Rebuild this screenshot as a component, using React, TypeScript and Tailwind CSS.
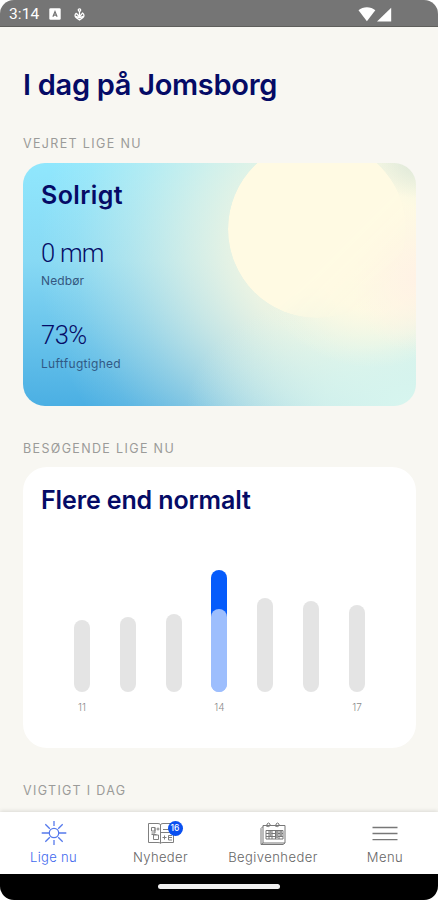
import React from 'react';

interface Bar {
  hour: number;
  height: number;
  current?: number;
  label?: boolean;
}

const bars: Bar[] = [
  { hour: 11, height: 72, label: true },
  { hour: 12, height: 75 },
  { hour: 13, height: 78 },
  { hour: 14, height: 83, current: 122, label: true },
  { hour: 15, height: 94 },
  { hour: 16, height: 91 },
  { hour: 17, height: 87, label: true },
];

function StatusBar() {
  return (
    <header className="flex h-[27px] items-center border-b border-[#5f5f5c] bg-[#757575] pl-[9px] pr-[46px] pt-0.5 text-white">
      <span className="w-10 pt-0.5 font-[Roboto] text-[15.5px] leading-none tracking-[0.1px]">3:14</span>
      <svg className="h-3 w-3" viewBox="0 0 12 12">
        <rect x="0.3" y="0.3" width="11.4" height="11.4" rx="1.2" fill="#fff" />
        <path d="M3.9 8.7 6 3.5 8.1 8.7M4.7 7.2h2.6" fill="none" stroke="#757575" strokeWidth="1.2" />
      </svg>
      <svg className="ml-[13px] h-[13px] w-[11px]" viewBox="0 0 11 13" fill="none" stroke="#fff" strokeWidth="1.3">
        <circle cx="5.5" cy="2" r="1.2" />
        <path d="M5.500 3.200V9M2.500 5C.700 6 .500 8.300 2.300 9.700L5.500 12 8.700 9.700C10.500 8.300 10.300 6 8.500 5L5.500 8.800 2.500 5.500M2 8.300l3.500 1.500L9 8.300" />
      </svg>
      <svg className="ml-auto h-[15px] w-[34px]" viewBox="0 0 34 15" fill="#fff">
        <path d="M.500 3.200C5-.8 12.800-.8 17.300 3.200L8.900 14.200Z" />
        <path d="M33.200.800V14.500H19Z" />
      </svg>
    </header>
  );
}

function WeatherCard() {
  return (
    <div className="relative h-[243px] overflow-hidden rounded-[22px] bg-[radial-gradient(ellipse_45px_35px_at_393px_0px,#dfe8d8_0,#dfe8d800_100%),radial-gradient(ellipse_65px_75px_at_393px_115px,#fff2e5_0,#fff2e500_100%),radial-gradient(ellipse_120px_115px_at_350px_90px,#fffae3_0,#fffae3f0_50%,#fffae390_70%,#fffae330_88%,#fffae300_100%),radial-gradient(ellipse_230px_130px_at_393px_243px,#d8f6ef_0,#d8f6efc0_40%,#d8f6ef00_100%),radial-gradient(ellipse_310px_290px_at_325px_90px,#f4f6e2_0,#f4f6e2eb_33%,#f4f6e2d4_40%,#f4f6e2a8_52%,#f4f6e25a_71%,#f4f6e21c_88%,#f4f6e200_100%),linear-gradient(to_bottom,#90e7fd_0,#87d9f4_40%,#4bafe3_100%)] px-[18px]">
      <div className="absolute left-[205px] top-[-23px] h-[178px] w-[178px] rounded-full bg-[#fffae3] [mask-image:linear-gradient(135deg,#000_60%,transparent_85%)]" />
      <div className="relative">
        <h2 className="pt-4 text-[25px] font-semibold leading-8 tracking-[0.4px]">Solrigt</h2>
        <p className="mt-[26px] font-[Roboto] text-[25.5px] font-light leading-8 tracking-[-0.7px]">0 mm</p>
        <p className="text-xs leading-6 tracking-[0.1px] text-[#35577f]">Nedbør</p>
        <p className="mt-[26px] font-[Roboto] text-[25.5px] font-light leading-8 tracking-[-0.5px]">73%</p>
        <p className="pt-px text-xs leading-6 tracking-[0.3px] text-[#315985]">Luftfugtighed</p>
      </div>
    </div>
  );
}

function VisitorsCard() {
  return (
    <div className="flex h-[281px] flex-col rounded-3xl bg-white">
      <h2 className="px-[18px] pt-[17px] text-[25px] font-semibold leading-8 tracking-[-0.12px]">Flere end normalt</h2>
      <div className="mt-auto flex h-[178px] items-start justify-between px-[51px]">
        {bars.map((bar) => (
          <div key={bar.hour} className="flex w-4 flex-col items-center">
            <div className="flex h-[122px] items-end">
              <div
                className={`flex w-4 items-end overflow-hidden rounded-full ${bar.current ? 'bg-linear-to-b from-[#055bfb] from-50% to-[#9dbefd] to-50%' : 'bg-[#e4e4e4]'}`}
                style={{ height: bar.current ?? bar.height }}
              >
                {bar.current && <div className="w-full rounded-t-full bg-[#9dbefd]" style={{ height: bar.height }} />}
              </div>
            </div>
            {bar.label && <span className="mt-[7px] text-[10px] font-light leading-4 text-[#8b8b8b]">{bar.hour}</span>}
          </div>
        ))}
      </div>
    </div>
  );
}

function SunIcon() {
  return (
    <svg className="h-[26px] w-[26px]" viewBox="0 0 26 26" fill="none" stroke="#5579ec" strokeWidth="1.3">
      <circle cx="13" cy="13" r="4.700" />
      <path d="M13 1v5M13 20v5M.700 13H8M18 13h7.300M4.300 4.300 8.800 8.800M17.200 17.200l4.500 4.500M4.300 21.700l4.500-4.500M17.200 8.800l4.500-4.500" />
    </svg>
  );
}

function NewsIcon() {
  return (
    <svg className="h-[22px] w-[28px]" viewBox="0 0 28 22" fill="none" stroke="#808080" strokeWidth="1">
      <path d="M1.500 1.500h9.500q2.500 0 2.500 1.500 0-1.500 2.500-1.500h10.500v19H16q-2.500 0-2.500 1 0-1-2.500-1H1.500ZM13.500 3v18" />
      <path d="M4.500 5.500H8v3.500H4.500ZM8 5.500v5.500H4.500M9.500 7h3M11 5.500v3M16 7.500h6M14 10.500h12M6.500 13h5v4.500h-5ZM4.500 12.500h5M15.500 15.500h4M17.500 13.500v4M25 13.500h-3.500v4.500H25M21.500 15.500H25" />
    </svg>
  );
}

function CalendarIcon() {
  return (
    <svg className="h-[24px] w-[26px]" viewBox="0 0 26 24" fill="none" stroke="#777" strokeWidth="1">
      <path d="M3 3.500h22v17.500H3ZM3 4.500 1 6.500v16h22l2-1.500M3 21 1 22.500" />
      <path d="M7 5V2q1.500-2 3 0v1.500q-1 2-3 .5M16 5V2q1.500-2 3 0v1.500q-1 2-3 .5" />
      <path d="M6 8.500h17v8.500H6ZM6 11.500h17M6 14.500h17M9 8.500V17M12 8.500V17M15.500 8.500V17M19 8.500V17" />
      <path d="M9.500 9h2v5h-2ZM16 9h2v7h-2ZM20 9h2v5h-2Z" fill="#999" stroke="none" />
    </svg>
  );
}

function BottomNav() {
  return (
    <nav className="flex h-[62px] shrink-0 bg-white text-[13px] text-[#666] shadow-[0_-1px_4px_rgba(0,0,0,0.12)]">
      <div className="flex w-[107px] flex-col items-center pt-2 text-[#4169ee]">
        <SunIcon />
        <span className="font-light leading-[22px] tracking-[0.3px]">Lige nu</span>
      </div>
      <div className="flex w-[107px] flex-col items-center pt-[10px]">
        <div className="relative h-6">
          <NewsIcon />
          <span className="absolute -right-[8px] -top-[1px] flex h-[15px] w-[15px] items-center justify-center rounded-full bg-[#0a50f0] text-[8.5px] font-medium text-white">
            16
          </span>
        </div>
        <span className="font-light leading-[22px] tracking-[0.4px]">Nyheder</span>
      </div>
      <div className="flex w-[118px] flex-col items-center pt-[10px]">
        <CalendarIcon />
        <span className="font-light leading-[22px] tracking-[0.45px]">Begivenheder</span>
      </div>
      <div className="flex w-[106px] flex-col items-center pt-[10px]">
        <svg className="h-6 w-[26px]" viewBox="0 0 26 24" stroke="#777" strokeWidth="1.300">
          <path d="M.5 5.500h25M.5 11.500h25M.5 17.700h25" />
        </svg>
        <span className="font-light leading-[22px] tracking-[0.5px]">Menu</span>
      </div>
    </nav>
  );
}

function SectionLabel({ children }: { children: React.ReactNode }) {
  return <h3 className="text-[12.5px] leading-5 tracking-[1.35px] text-[#9b9b99]">{children}</h3>;
}

export default function App() {
  return (
    <div className="h-[900px] w-[438px] bg-white">
      <div className="flex h-full flex-col overflow-hidden rounded-[14px] bg-[#f8f7f2] font-[Inter,sans-serif] text-[#050b66]">
        <StatusBar />
        <main className="min-h-0 flex-1 overflow-hidden pl-[23px] pr-[22px]">
          <h1 className="pt-[38px] text-[29px] font-semibold leading-10 tracking-[-0.3px]">I dag på Jomsborg</h1>
          <div className="mt-[29px]">
            <SectionLabel>VEJRET LIGE NU</SectionLabel>
          </div>
          <div className="mt-[9px]">
            <WeatherCard />
          </div>
          <div className="mb-2 mt-[33px]">
            <SectionLabel>BESØGENDE LIGE NU</SectionLabel>
          </div>
          <VisitorsCard />
          <div className="mt-[33px]">
            <SectionLabel>VIGTIGT I DAG</SectionLabel>
          </div>
        </main>
        <BottomNav />
        <footer className="flex h-[26px] shrink-0 justify-center bg-black pt-[10px]">
          <div className="h-[5px] w-[122px] rounded-full bg-[#f0f0f0]" />
        </footer>
      </div>
    </div>
  );
}
